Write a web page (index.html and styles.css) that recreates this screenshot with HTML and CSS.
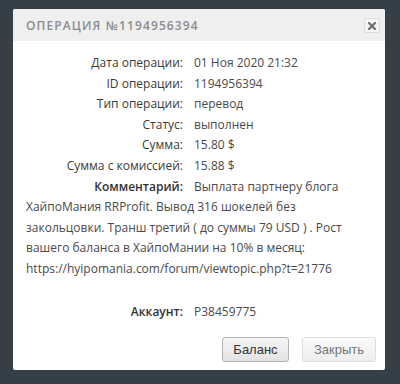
FILE: index.html
```html
<!DOCTYPE html>
<html lang="ru">
<head>
<meta charset="utf-8">
<link rel="stylesheet" href="styles.css">
</head>
<body>
<div class="modal">
  <div class="modal-header">
    <div class="title">ОПЕРАЦИЯ №1194956394</div>
    <button class="close" aria-label="close">
      <svg width="8" height="8" viewBox="0 0 8 8"><path d="M1 1L7 7M7 1L1 7" stroke="#6f6f6f" stroke-width="2.2" stroke-linecap="square"/></svg>
    </button>
  </div>
  <div class="modal-body">
    <div class="rows">
      <div class="label">Дата операции:</div><div class="value">01 Ноя 2020 21:32</div>
      <div class="label">ID операции:</div><div class="value">1194956394</div>
      <div class="label">Тип операции:</div><div class="value">перевод</div>
      <div class="label">Статус:</div><div class="value">выполнен</div>
      <div class="label">Сумма:</div><div class="value">15.80 $</div>
      <div class="label">Сумма с комиссией:</div><div class="value">15.88 $</div>
    </div>
    <p class="comment"><span class="label strong inline">Комментарий:</span>Выплата партнеру блога ХайпоМания RRProfit. Вывод 316 шокелей без закольцовки. Транш третий ( до суммы 79 USD ) . Рост вашего баланса в ХайпоМании на 10% в месяц: https://hyipomania.com/forum/viewtopic.php?t=21776</p>
    <div class="rows account">
      <div class="label strong">Аккаунт:</div><div class="value">P38459775</div>
    </div>
  </div>
  <div class="modal-footer">
    <button class="btn btn-primary">Баланс</button>
    <button class="btn btn-light">Закрыть</button>
  </div>
</div>
</body>
</html>
```

FILE: styles.css
```css
html, body {
  margin: 0;
  padding: 0;
  background: #343f47;
}
body {
  padding: 9px 0 0 13px;
  font-family: "Open Sans", "Liberation Sans", sans-serif;
}
.modal {
  width: 372px;
  height: 361px;
  background: #ffffff;
  border-radius: 2px;
  display: flex;
  flex-direction: column;
  overflow: hidden;
}
.modal-header {
  height: 32px;
  background: #efefef;
  display: flex;
  align-items: center;
  justify-content: space-between;
  padding: 0 5px 0 13px;
}
.title {
  font-size: 12px;
  font-weight: 600;
  letter-spacing: 1.1px;
  color: #8c8c8c;
  padding-top: 1px;
}
.close {
  width: 16px;
  height: 15px;
  padding: 0;
  border: 1px solid #dcdcdc;
  border-radius: 2px;
  background: #f3f3f3;
  display: flex;
  align-items: center;
  justify-content: center;
  margin-top: 1px;
}
.modal-body {
  padding: 12px 25px 0 13px;
  font-size: 12px;
  line-height: 20.6px;
  color: #4a4a4a;
}
.rows {
  display: grid;
  grid-template-columns: 157px 1fr;
  column-gap: 11px;
}
.label {
  text-align: right;
  color: #3a3a3a;
}
.strong {
  font-weight: 600;
  color: #333;
}
.inline {
  display: inline-block;
  width: 157px;
  margin-right: 11px;
}
.comment {
  margin: 0;
}
.account {
  margin-top: 22px;
}
.modal-footer {
  margin-top: auto;
  display: flex;
  justify-content: flex-end;
  gap: 13px;
  padding: 0 9px 8px 0;
}
.btn {
  height: 25px;
  border-radius: 3px;
  font-family: "Liberation Sans", Arial, sans-serif;
  font-size: 13px;
  padding: 0;
}
.btn-primary {
  width: 67px;
  border: 1px solid #b3b3b3;
  background: linear-gradient(#f6f6f6, #e2e2e2);
  color: #333;
}
.btn-light {
  width: 74px;
  border: 1px solid #dedede;
  background: linear-gradient(#fafafa, #eeeeee);
  color: #777;
}
```
